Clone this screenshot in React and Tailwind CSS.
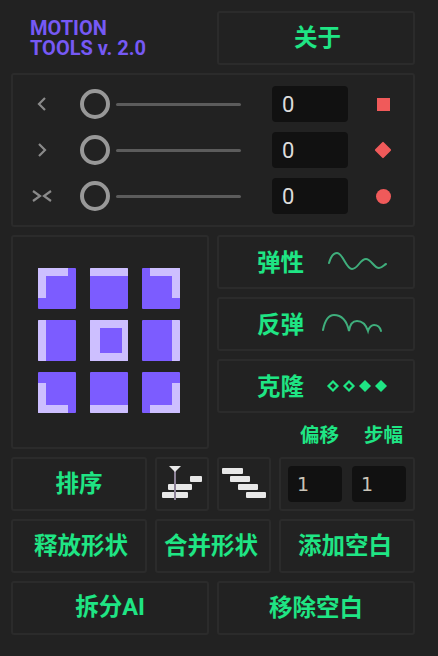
const cjk = "font-['Roboto','Noto_Sans_CJK_SC',sans-serif]";

function Panel({ className = '', children }) {
  return (
    <div className={`border-2 border-[#2b2b2b] rounded-[3px] ${className}`}>
      {children}
    </div>
  );
}

function GreenButton({ label, className = '' }) {
  return (
    <Panel className={`flex items-center justify-center ${className}`}>
      <span className={`${cjk} font-bold text-[#1fe584] text-[23.5px] leading-none pt-[2px]`}>{label}</span>
    </Panel>
  );
}

function SliderRow({ icon, shape }) {
  return (
    <div className="flex items-center h-[36px]">
      <div className="w-[24px] ml-[17px] flex justify-center">{icon}</div>
      <div className="ml-[26px] w-[30px] h-[30px] rounded-full border-4 border-[#989898]" />
      <div className="ml-[6px] w-[125px] h-[3px] bg-[#5c5c5c] rounded-full" />
      <div className="ml-[31px] w-[76px] h-[36px] bg-[#111111] rounded-[4px] flex items-center pl-[10px] text-[22px] text-[#dcdcdc] font-['Roboto',sans-serif]">
        0
      </div>
      <div className="ml-[27px] w-[16px] flex justify-center">{shape}</div>
    </div>
  );
}

// which edges of a grid cell carry the light band
function Cell({ bands = [] }) {
  return (
    <div className="relative h-[41px] bg-[#7c5cff] rounded-[1px] overflow-hidden">
      {bands.map((b) => (
        <span key={b} className={`absolute bg-[#cdbfff] ${b}`} />
      ))}
    </div>
  );
}

const T = 'top-0 h-[8px]';
const B = 'bottom-0 h-[8px]';
const L = 'left-0 w-[8px]';
const R = 'right-0 w-[8px]';

const cells = [
  [`${T} left-0 w-[30px]`, `${L} top-0 h-[30px]`],
  [`${T} left-0 right-0`],
  [`${T} right-0 w-[30px]`, `${R} top-0 h-[30px]`],
  [`${L} top-0 bottom-0`],
  [`${T} left-0 right-0`, `${B} left-0 right-0`, 'left-0 top-0 bottom-0 w-[10px]', 'right-0 top-0 bottom-0 w-[6px]'],
  [`${R} top-0 bottom-0`],
  [`${L} bottom-0 h-[30px]`, `${B} left-0 w-[30px]`],
  [`${B} left-0 right-0`],
  [`${R} bottom-0 h-[30px]`, `${B} right-0 w-[30px]`],
];

function Chevron({ d, w = 14 }) {
  return (
    <svg width={w} height="16" viewBox={`0 0 ${w} 16`} fill="none" stroke="#8a8a8a" strokeWidth="2.2">
      <path d={d} />
    </svg>
  );
}

function Wave() {
  return (
    <svg width="60" height="24" viewBox="0 0 60 24" fill="none" stroke="#3fae7c" strokeWidth="2" strokeLinecap="round">
      <path d="M1 13C3 6 6 3 9 3C15 3 18 19 24 19C30 19 32 9 38 9C43 9 46 18 51 18C54 18 56 15 58 14" />
    </svg>
  );
}

function Bounce() {
  return (
    <svg width="62" height="22" viewBox="0 0 62 22" fill="none" stroke="#3fae7c" strokeWidth="2" strokeLinecap="round">
      <path d="M1 17C3 7 7 2 12 2C20 2 25 9 27 18C28 11 31 8 35 8C40 8 44 12 46 18C47 14 50 12 52 12C55 12 58 14 59 18" />
    </svg>
  );
}

function Clones() {
  return (
    <svg width="64" height="14" viewBox="0 0 64 14">
      <path d="M7 2.5L11.5 7L7 11.5L2.5 7Z" fill="none" stroke="#1fe584" strokeWidth="2.2" />
      <path d="M23 2.5L27.5 7L23 11.5L18.5 7Z" fill="none" stroke="#1fe584" strokeWidth="2.2" />
      <path d="M39 1L45 7L39 13L33 7Z" fill="#1fe584" />
      <path d="M55 1L61 7L55 13L49 7Z" fill="#1fe584" />
    </svg>
  );
}

function EaseButton({ label, icon, gap }) {
  return (
    <Panel className={`h-[54px] flex items-center pl-[38px] ${gap}`}>
      <span className={`${cjk} font-bold text-[#1fe584] text-[23.5px] leading-none pt-[3px]`}>{label}</span>
      {icon}
    </Panel>
  );
}

function SortIconA() {
  return (
    <svg width="50" height="38" viewBox="0 0 50 38">
      <rect x="33" y="11" width="12" height="6" rx="1" fill="#e8e8e8" />
      <rect x="11" y="19" width="24" height="6" rx="1" fill="#e8e8e8" />
      <rect x="5" y="27" width="26" height="6" rx="1" fill="#e8e8e8" />
      <path d="M18 5V35" stroke="#8d8298" strokeWidth="2" />
      <path d="M12 1H24L18 7Z" fill="#e8e8e8" />
    </svg>
  );
}

function SortIconB() {
  return (
    <svg width="48" height="34" viewBox="0 0 48 34">
      <rect x="2" y="1" width="21" height="6" rx="1" fill="#e8e8e8" />
      <rect x="10" y="9" width="20" height="6" rx="1" fill="#e8e8e8" />
      <rect x="18" y="17" width="20" height="6" rx="1" fill="#e8e8e8" />
      <rect x="26" y="25" width="20" height="6" rx="1" fill="#e8e8e8" />
    </svg>
  );
}

function SmallInput() {
  return (
    <div className="w-[54px] h-[36px] bg-[#111111] rounded-[4px] flex items-center pl-[9px] text-[19px] text-[#c9c4b8] font-['DejaVu_Sans',sans-serif]">
      1
    </div>
  );
}

export default function App() {
  return (
    <div className="w-[438px] h-[656px] bg-[#222222] pt-[11px] pl-[11px] flex flex-col gap-[8px] overflow-hidden">
      <div className="flex gap-[8px] w-[404px]">
        <div className="w-[198px] pl-[19px] pt-[7px] font-['Roboto',sans-serif] font-bold text-[20px] leading-[20px] text-[#7659f5]">
          <div>MOTION</div>
          <div>TOOLS v. 2.0</div>
        </div>
        <GreenButton label="关于" className="w-[198px] h-[54px] pl-[3px]" />
      </div>

      <Panel className="w-[404px] h-[154px] flex flex-col justify-center gap-[10px]">
        <SliderRow
          icon={<Chevron d="M10 2L4 8L10 14" />}
          shape={<div className="w-[13px] h-[13px] bg-[#f05a5a]" />}
        />
        <SliderRow
          icon={<Chevron d="M4 2L10 8L4 14" />}
          shape={<div className="w-[12px] h-[12px] bg-[#f05a5a] rotate-45 rounded-[1px]" />}
        />
        <SliderRow
          icon={<Chevron w={20} d="M1 3L8 8L1 13M19 3L12 8L19 13" />}
          shape={<div className="w-[15px] h-[15px] bg-[#f05a5a] rounded-full" />}
        />
      </Panel>

      <div className="flex gap-[8px] w-[404px]">
        <Panel className="w-[198px] h-[214px] flex items-center justify-center">
          <div className="grid grid-cols-[38px_38px_38px] gap-x-[14px] gap-y-[11px] mb-[3px] mr-[2px]">
            {cells.map((bands, i) => (
              <Cell key={i} bands={bands} />
            ))}
          </div>
        </Panel>
        <div className="w-[198px] flex flex-col gap-[8px]">
          <EaseButton label="弹性" icon={<Wave />} gap="gap-[24px]" />
          <EaseButton label="反弹" icon={<Bounce />} gap="gap-[18px]" />
          <EaseButton label="克隆" icon={<Clones />} gap="gap-[22px]" />
          <div className={`flex justify-end gap-[25px] pr-[12px] pt-[5px] ${cjk} font-bold text-[#1fe584] text-[19.5px] leading-none`}>
            <span>偏移</span>
            <span>步幅</span>
          </div>
        </div>
      </div>

      <div className="flex gap-[8px] w-[404px] h-[54px]">
        <GreenButton label="排序" className="w-[136px]" />
        <Panel className="w-[54px] flex items-center justify-center"><SortIconA /></Panel>
        <Panel className="w-[54px] flex items-center justify-center"><SortIconB /></Panel>
        <Panel className="w-[136px] flex items-center justify-center gap-[10px]">
          <SmallInput />
          <SmallInput />
        </Panel>
      </div>

      <div className="flex gap-[8px] w-[404px] h-[54px]">
        <GreenButton label="释放形状" className="w-[136px] pl-[4px]" />
        <GreenButton label="合并形状" className="w-[116px] pr-[4px]" />
        <GreenButton label="添加空白" className="w-[136px] pr-[4px]" />
      </div>

      <div className="flex gap-[8px] w-[404px] h-[54px]">
        <GreenButton label="拆分AI" className="w-[198px] pb-[3px]" />
        <GreenButton label="移除空白" className="w-[198px]" />
      </div>
    </div>
  );
}
